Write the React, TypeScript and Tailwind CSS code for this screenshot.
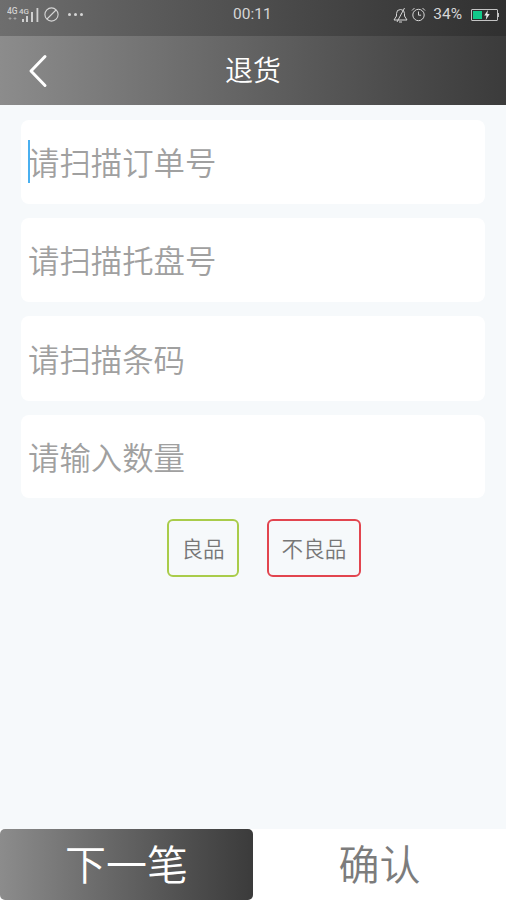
const FONT = "font-['Roboto','Noto_Sans_CJK_SC',sans-serif]";

function SignalBars() {
  return (
    <svg width="32" height="16" viewBox="0 0 32 16" className="text-[#d0d0d0]" aria-hidden>
      <text x="0" y="7" fontSize="8.5" fill="currentColor" fontFamily="Roboto" fontWeight="500">4G</text>
      <text x="12" y="7" fontSize="8" fill="currentColor" fontFamily="Roboto" fontWeight="500">4G</text>
      <path d="M3 10v3M1.5 11.5h3M8 10v3M6.5 11.5h3" stroke="currentColor" strokeWidth="0.7" opacity="0.7" />
      <rect x="15" y="12" width="2" height="3" fill="currentColor" />
      <rect x="19" y="9" width="2" height="6" fill="currentColor" />
      <rect x="24" y="5" width="2" height="10" fill="currentColor" />
      <rect x="29.5" y="1" width="1.8" height="14" fill="currentColor" />
    </svg>
  );
}

function StatusBar() {
  return (
    <div className="flex h-9 items-center bg-gradient-to-r from-[#6e6e6e] to-[#303030] pb-[7px] pl-[7px] pr-[7px] text-[#d6d6d6]">
      <div className="flex w-[190px] items-center">
        <SignalBars />
        <svg width="15" height="15" viewBox="0 0 15 15" fill="none" stroke="currentColor" strokeWidth="1.1" className="ml-[5px]" aria-hidden>
          <circle cx="7.5" cy="7.5" r="6.6" />
          <path d="M3 12 12 3" />
        </svg>
        <div className="ml-[9px] flex gap-[3px]">
          <span className="h-[3px] w-[3px] rounded-full bg-current" />
          <span className="h-[3px] w-[3px] rounded-full bg-current" />
          <span className="h-[3px] w-[3px] rounded-full bg-current" />
        </div>
      </div>
      <span className="ml-[36px] text-[15.5px]">00:11</span>
      <div className="ml-auto flex items-center">
        <svg width="15" height="16" viewBox="0 0 15 16" fill="none" stroke="currentColor" strokeWidth="1" aria-hidden>
          <path d="M1 13h13l-2.5-4V6.5a4 4 0 0 0-4-4 4 4 0 0 0-4 4V9z" />
          <path d="M6 15h3M11.5 1 4 15" />
        </svg>
        <svg width="15" height="15" viewBox="0 0 15 15" fill="none" stroke="currentColor" strokeWidth="1" className="ml-[3px]" aria-hidden>
          <circle cx="7.5" cy="8" r="5.7" />
          <path d="M7.5 4.5v3.7h2.6M1 3.5 3.5 1M14 3.5 11.5 1" />
        </svg>
        <span className="ml-[7px] text-[15.5px]">34%</span>
        <div className="relative ml-[9px] flex h-[12px] w-[27px] items-stretch rounded-[1px] border border-[#c4c4c4] bg-[#2e2e2e] p-px">
          <div className="w-[9px] bg-[#12c98a]" />
          <svg width="8" height="10" viewBox="0 0 8 11" className="absolute left-[11px] top-0" aria-hidden>
            <path d="M5 0 1 6h2.4L2.6 11 7 4.5H4.4z" fill="#e8e8e8" />
          </svg>
        </div>
        <div className="h-[4px] w-[1px] bg-[#c4c4c4]" />
      </div>
    </div>
  );
}

function Field({ hint, focused, h }: { hint: string; focused?: boolean; h: string }) {
  return (
    <div className={`relative flex ${h} items-center rounded-lg bg-white pl-[7px] pt-[6px]`}>
      {focused && <span className="absolute left-[7px] top-[20px] h-[43px] w-[2px] bg-[#4ab0f0]" />}
      <span className="text-[31.4px] font-[350] leading-none text-[#a0a0a0]">{hint}</span>
    </div>
  );
}

export default function App() {
  return (
    <div className={`${FONT} flex h-[900px] w-[506px] flex-col bg-[#f6f9fb]`}>
      <StatusBar />
      <header className="relative flex h-[69px] items-center justify-center bg-gradient-to-r from-[#8c8c8c] to-[#3b3b3b] pt-[3px]">
        <svg width="20" height="34" viewBox="0 0 20 34" fill="none" stroke="white" strokeWidth="3" strokeLinecap="round" strokeLinejoin="round" className="absolute left-[28px] top-[18px]" aria-hidden>
          <path d="M17 2.5 3 17l14 14.5" />
        </svg>
        <h1 className="text-[28px] font-[350] leading-none text-white">退货</h1>
      </header>

      <main className="flex flex-1 flex-col px-[21px] pt-[15px]">
        <div className="flex flex-col gap-[14px]">
          <Field h="h-[84px]" hint="请扫描订单号" focused />
          <Field h="h-[84px]" hint="请扫描托盘号" />
          <Field h="h-[85px]" hint="请扫描条码" />
          <Field h="h-[83px]" hint="请输入数量" />
        </div>
        <div className="mt-[21px] flex justify-center gap-7 pl-[22px]">
          <button className="h-[58px] w-[72px] rounded-md border-2 border-[#a9cc4a] pt-[4px] text-[21.6px] font-[350] text-[#777777]">良品</button>
          <button className="h-[58px] w-[94px] rounded-md border-2 border-[#e2454f] pt-[4px] text-[21.6px] font-[350] text-[#777777]">不良品</button>
        </div>
      </main>

      <footer className="flex h-[71px] bg-white">
        <button className="h-full w-[253px] rounded-[5px] bg-gradient-to-r from-[#8c8c8c] to-[#3b3b3b] pt-[5px] text-[41px] font-[350] text-white">下一笔</button>
        <button className="h-full flex-1 pt-[5px] text-[41px] font-[350] text-[#7c7c7c]">确认</button>
      </footer>
    </div>
  );
}
